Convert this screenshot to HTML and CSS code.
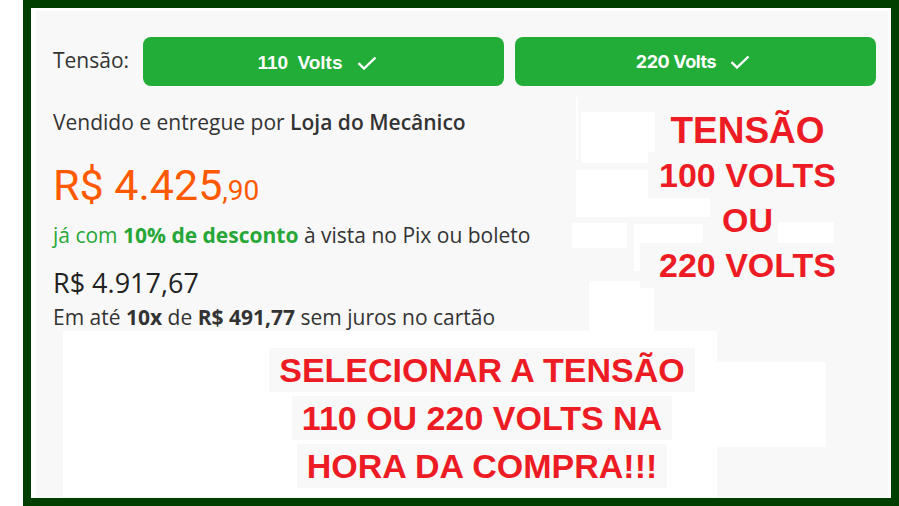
FILE: index.html
```html
<!DOCTYPE html>
<html lang="pt-BR">

<head>
    <meta charset="UTF-8">
    <meta name="viewport" content="width=device-width, initial-scale=1.0">
    <title>Tensão - Loja do Mecânico</title>
    <link rel="stylesheet" href="styles.css">
</head>

<body>
    <div class="frame">
        <div class="panel">
            <div class="tensao">
                <span class="label">Tensão:</span>
                <button class="volt volt-110">110 Volts
                    <svg width="20" height="14" viewBox="0 0 20 14"><path d="M1.5 7.2 L7 12.5 L18.5 1.5" /></svg>
                </button>
                <button class="volt volt-220">220 Volts
                    <svg width="20" height="14" viewBox="0 0 20 14"><path d="M1.5 7.2 L7 12.5 L18.5 1.5" /></svg>
                </button>
            </div>

            <p class="seller">Vendido e entregue por <b>Loja do Mecânico</b></p>

            <p class="price">R$ 4.425<small>,90</small></p>
            <p class="pix"><span class="green">já com <b>10% de desconto</b></span> à vista no Pix ou boleto</p>

            <p class="full">R$ 4.917,67</p>
            <p class="parcel">Em até <b>10x</b> de <b>R$ 491,77</b> sem juros no cartão</p>

            <!-- pedaços brancos que sobraram da edição -->
            <div class="patch" style="left:545px;top:101px;width:74px;height:40px"></div>
            <div class="patch" style="left:545px;top:141px;width:67px;height:11px"></div>
            <div class="patch" style="left:540px;top:86px;width:2px;height:63px"></div>
            <div class="patch" style="left:540px;top:159px;width:72px;height:28px"></div>
            <div class="patch" style="left:540px;top:187px;width:134px;height:19px"></div>
            <div class="patch" style="left:536px;top:212px;width:55px;height:25px"></div>
            <div class="patch" style="left:598px;top:213px;width:69px;height:47px"></div>
            <div class="patch" style="left:742px;top:211px;width:56px;height:23px"></div>
            <div class="patch" style="left:553px;top:270px;width:65px;height:50px"></div>
            <div class="patch" style="left:27px;top:320px;width:654px;height:166px"></div>
            <div class="patch" style="left:681px;top:351px;width:109px;height:85px"></div>

            <div class="note note-top">
                <div class="big">TENSÃO</div>
                <div>100 VOLTS</div>
                <div>OU</div>
                <div class="bg">220 VOLTS</div>
            </div>

            <div class="note note-bottom">
                <div><span>SELECIONAR A TENSÃO</span></div>
                <div><span>110 OU 220 VOLTS NA</span></div>
                <div><span>HORA DA COMPRA!!!</span></div>
            </div>
        </div>
    </div>
</body>

</html>
```

FILE: styles.css
```css
* {
    padding: 0;
    margin: 0;
    box-sizing: border-box;
}

body {
    background: #fff;
    font-family: "Open Sans", "Liberation Sans", sans-serif;
    color: #333;
}

.frame {
    margin-left: 23px;
    width: 876px;
    height: 506px;
    border: 8px solid #003f00;
    padding: 3px 3px 0 5px;
    background: #fff;
}

.panel {
    position: relative;
    height: 100%;
    background: #f8f8f8;
    padding: 26px 12px 0 17px;
}

.tensao {
    display: flex;
    align-items: center;
    gap: 11px;
}

.tensao .label {
    width: 80px;
    font-size: 21px;
    color: #333;
    margin-top: -4px;
}

.volt {
    flex: none;
    width: 361px;
    height: 49px;
    border: none;
    border-radius: 8px;
    background: #22ad38;
    color: #fff;
    display: flex;
    align-items: center;
    justify-content: center;
    gap: 15px;
}

.volt svg path {
    fill: none;
    stroke: #fff;
    stroke-width: 2.4;
}

.volt-110 {
    font-family: "Liberation Sans", Arial, sans-serif;
    font-weight: bold;
    font-size: 19px;
    word-spacing: 4px;
    padding: 2px 12px 0 0;
}

.volt-220 {
    font-family: Inter, "Liberation Sans", sans-serif;
    font-weight: 700;
    font-size: 18px;
    letter-spacing: -0.4px;
    padding-right: 5px;
    gap: 14px;
}

.seller {
    margin-top: 23px;
    font-size: 21px;
    line-height: 26px;
}

.seller b {
    font-weight: 600;
}

.price {
    margin-top: 25px;
    font-family: Roboto, "Liberation Sans", sans-serif;
    font-size: 43px;
    line-height: 50px;
    color: #ff5a00;
}

.price small {
    font-size: 28px;
}

.pix {
    margin-top: 5px;
    font-size: 21px;
    line-height: 28px;
}

.green {
    color: #27a737;
}

.full {
    margin-top: 19px;
    font-size: 27px;
    line-height: 30px;
    font-weight: 500;
    color: #222;
}

.parcel {
    margin-top: 6px;
    font-size: 21px;
    line-height: 26px;
}

.parcel b {
    font-weight: 700;
}

.patch {
    position: absolute;
    background: #fff;
}

.note {
    position: absolute;
    font-family: "Liberation Sans", Arial, sans-serif;
    font-weight: bold;
    color: #ed1c24;
    text-align: center;
    font-size: 34px;
    white-space: nowrap;
}

.note-top {
    left: 604px;
    top: 97px;
    width: 215px;
    line-height: 45px;
}

.note-top .big {
    font-size: 37px;
}

.note-top .bg {
    background: #f8f8f8;
}

.note-bottom {
    left: 206px;
    top: 335px;
    width: 480px;
    line-height: 48px;
}

.note-bottom span {
    display: inline-block;
    background: #f8f8f8;
    padding: 0 10px;
    line-height: 44px;
    margin: 2px 0;
}
```
